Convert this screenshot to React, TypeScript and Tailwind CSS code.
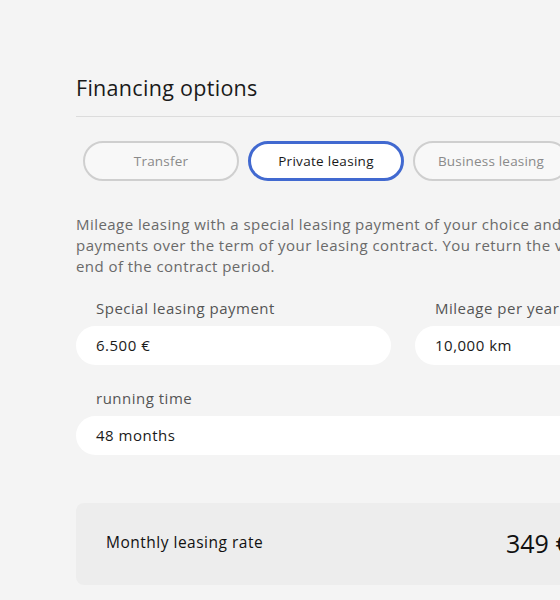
import React from "react";

export default function App() {
  const font = { fontFamily: '"Open Sans", "Liberation Sans", sans-serif' };
  return (
    <div className="w-[560px] h-[600px] overflow-hidden bg-[#f4f4f4]" style={font}>
      <div className="w-[760px] pl-[76px] pt-[74px]">
        <div className="w-[654px]">
          <h2 className="text-[21.5px] leading-[28px] font-medium text-[#1a1a1a] tracking-[0.3px]">Financing options</h2>
          <div className="mt-[14px] h-px bg-[#dcdcdc]" />
          <div className="mt-[24px] pl-[7px] flex gap-[9px]">
            <button className="w-[156px] h-[40px] rounded-full border-2 border-[#cfcfcf] bg-[#f8f8f8] text-[13.5px] font-medium text-[#8a8a8a] tracking-[0.2px]">Transfer</button>
            <button className="w-[156px] h-[40px] rounded-full border-[3px] border-[#4169d0] bg-white text-[13.5px] font-medium text-[#1a1a1a] tracking-[0.3px]">Private leasing</button>
            <button className="w-[156px] h-[40px] rounded-full border-2 border-[#cfcfcf] bg-[#f8f8f8] text-[13.5px] font-medium text-[#8a8a8a] tracking-[0.2px]">Business leasing</button>
          </div>
          <p className="mt-[33px] w-[700px] text-[15px] leading-[21px] text-[#6a6a6a] tracking-[0.45px]">
            Mileage leasing with a special leasing payment of your choice and fixed
            <br />
            payments over the term of your leasing contract. You return the vehicle at the
            <br />
            end of the contract period.
          </p>
          <div className="mt-[21px] grid grid-cols-2 gap-x-[24px]">
            <div>
              <div className="pl-[20px] text-[15px] leading-[20px] font-medium text-[#555] tracking-[0.5px] whitespace-nowrap">Special leasing payment</div>
              <div className="mt-[8px] h-[39px] rounded-full bg-white pl-[20px] flex items-center text-[15px] font-medium text-[#1a1a1a] tracking-[0.5px]">6.500 €</div>
            </div>
            <div>
              <div className="pl-[20px] text-[15px] leading-[20px] font-medium text-[#555] tracking-[0.5px] whitespace-nowrap">Mileage per year</div>
              <div className="mt-[8px] h-[39px] rounded-full bg-white pl-[20px] flex items-center text-[15px] font-medium text-[#1a1a1a] tracking-[0.5px]">10,000 km</div>
            </div>
          </div>
          <div className="mt-[23px]">
            <div className="pl-[20px] text-[15px] leading-[20px] font-medium text-[#555] tracking-[0.5px]">running time</div>
            <div className="mt-[8px] h-[39px] rounded-full bg-white pl-[20px] flex items-center text-[15px] font-medium text-[#1a1a1a] tracking-[0.5px]">48 months</div>
          </div>
          <div className="mt-[48px] h-[82px] rounded-[8px] bg-[#ededed] pl-[30px] flex items-center">
            <div className="w-[400px] mb-[3px] text-[15.5px] font-medium text-[#111] tracking-[0.5px]">Monthly leasing rate</div>
            <div className="text-[25px] font-normal text-[#111] whitespace-nowrap">349 €</div>
          </div>
        </div>
      </div>
    </div>
  );
}
